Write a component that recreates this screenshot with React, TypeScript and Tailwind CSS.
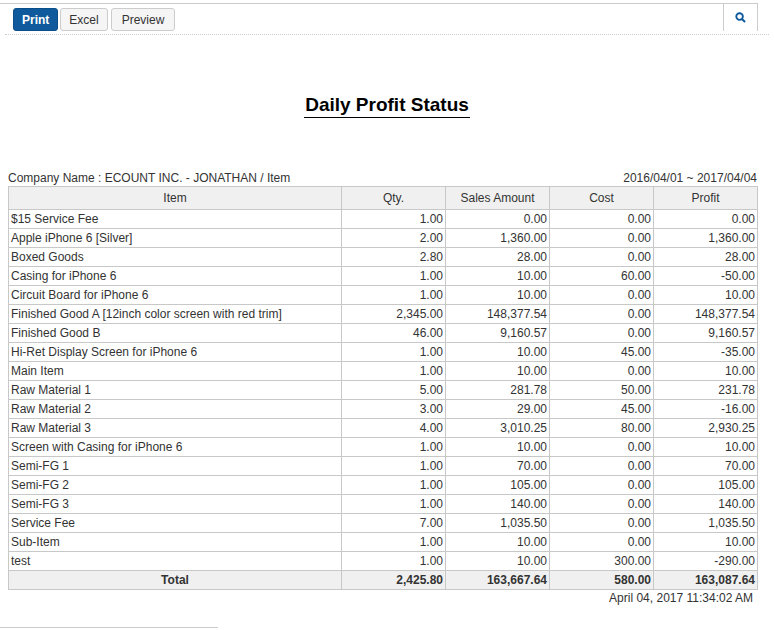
const rows: [string, string, string, string, string][] = [
  ["$15 Service Fee", "1.00", "0.00", "0.00", "0.00"],
  ["Apple iPhone 6 [Silver]", "2.00", "1,360.00", "0.00", "1,360.00"],
  ["Boxed Goods", "2.80", "28.00", "0.00", "28.00"],
  ["Casing for iPhone 6", "1.00", "10.00", "60.00", "-50.00"],
  ["Circuit Board for iPhone 6", "1.00", "10.00", "0.00", "10.00"],
  ["Finished Good A [12inch color screen with red trim]", "2,345.00", "148,377.54", "0.00", "148,377.54"],
  ["Finished Good B", "46.00", "9,160.57", "0.00", "9,160.57"],
  ["Hi-Ret Display Screen for iPhone 6", "1.00", "10.00", "45.00", "-35.00"],
  ["Main Item", "1.00", "10.00", "0.00", "10.00"],
  ["Raw Material 1", "5.00", "281.78", "50.00", "231.78"],
  ["Raw Material 2", "3.00", "29.00", "45.00", "-16.00"],
  ["Raw Material 3", "4.00", "3,010.25", "80.00", "2,930.25"],
  ["Screen with Casing for iPhone 6", "1.00", "10.00", "0.00", "10.00"],
  ["Semi-FG 1", "1.00", "70.00", "0.00", "70.00"],
  ["Semi-FG 2", "1.00", "105.00", "0.00", "105.00"],
  ["Semi-FG 3", "1.00", "140.00", "0.00", "140.00"],
  ["Service Fee", "7.00", "1,035.50", "0.00", "1,035.50"],
  ["Sub-Item", "1.00", "10.00", "0.00", "10.00"],
  ["test", "1.00", "10.00", "300.00", "-290.00"],
];

export default function App() {
  return (
    <div className="relative w-[774px] h-[630px] bg-white text-[12px] text-[#333]" style={{ fontFamily: '"Liberation Sans", Arial, sans-serif' }}>
      <div className="flex items-start h-[35px] border-b border-dotted border-[#ccc] mx-[5px]">
        <div className="flex-1 flex gap-[2px] pt-[4px] pl-[13px] border-t border-[#ccc] mt-[3px] -ml-[5px] h-[31px]">
          <button className="h-[23px] px-[8px] rounded-[3px] bg-[#0e5a9c] text-white font-bold border border-[#0b4f8a]">Print</button>
          <button className="h-[23px] px-[8px] rounded-[3px] bg-[#f5f5f5] border border-[#ccc] text-[#333]">Excel</button>
          <button className="h-[23px] px-[10px] rounded-[3px] bg-[#f5f5f5] border border-[#ccc] text-[#333] ml-[1px]">Preview</button>
        </div>
        <div className="w-[35px] h-[28px] mt-[3px] border border-[#ccc] border-b-0 bg-white flex items-center justify-center mr-[11px]">
          <svg width="11" height="11" viewBox="0 0 12 12"><circle cx="5" cy="5" r="3.6" fill="none" stroke="#0e5a9c" strokeWidth="2" /><line x1="7.6" y1="7.6" x2="11" y2="11" stroke="#0e5a9c" strokeWidth="2.2" /></svg>
        </div>
      </div>
      <div className="flex justify-center mt-[58px]">
        <div className="text-[19px] font-bold text-black border-b border-black leading-[24px] px-[1px]">Daily Profit Status</div>
      </div>
      <div className="mx-[8px] mt-[53px] w-[749px]">
        <div className="flex justify-between leading-[14px]">
          <span>Company Name : ECOUNT INC. - JONATHAN / Item</span>
          <span>2016/04/01 ~ 2017/04/04</span>
        </div>
        <table className="border-collapse w-[749px] table-fixed mt-[1px]">
          <colgroup>
            <col style={{ width: 333 }} /><col style={{ width: 104 }} /><col style={{ width: 104 }} /><col style={{ width: 104 }} /><col style={{ width: 104 }} />
          </colgroup>
          <thead>
            <tr className="bg-[#f0f0f0] h-[23px]">
              {["Item", "Qty.", "Sales Amount", "Cost", "Profit"].map((h) => (
                <th key={h} className="border border-[#c8c8c8] font-normal text-center p-0">{h}</th>
              ))}
            </tr>
          </thead>
          <tbody>
            {rows.map((r) => (
              <tr key={r[0]} className="h-[19px]">
                <td className="border border-[#c8c8c8] px-[2px] py-0 leading-[18px] whitespace-nowrap">{r[0]}</td>
                {r.slice(1).map((v, i) => (
                  <td key={i} className="border border-[#c8c8c8] px-[2px] py-0 text-right leading-[18px]">{v}</td>
                ))}
              </tr>
            ))}
            <tr className="h-[19px] bg-[#f0f0f0] font-bold">
              <td className="border border-[#c8c8c8] text-center p-0">Total</td>
              {["2,425.80", "163,667.64", "580.00", "163,087.64"].map((v) => (
                <td key={v} className="border border-[#c8c8c8] px-[2px] py-0 text-right">{v}</td>
              ))}
            </tr>
          </tbody>
        </table>
        <div className="text-right pr-[4px] leading-[16px]">April 04, 2017 11:34:02 AM</div>
      </div>
      <div className="absolute left-0 bottom-[2px] w-[218px] border-t border-[#ccc]" />
    </div>
  );
}
